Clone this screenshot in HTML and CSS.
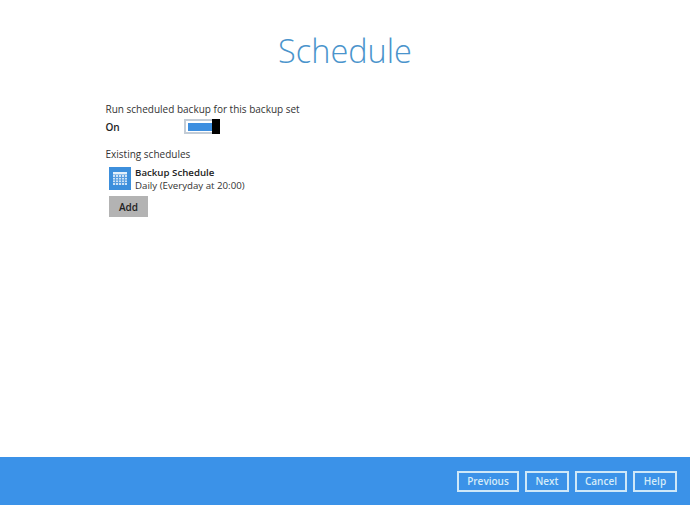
FILE: index.html
```html
<!DOCTYPE html>
<html lang="en">
<head>
    <meta charset="UTF-8">
    <meta name="viewport" content="width=device-width, initial-scale=1.0">
    <title>Schedule</title>
    <link rel="stylesheet" href="styles.css">
</head>
<body>
    <div class="main">
        <h1>Schedule</h1>
        <div class="content">
            <div class="run-label">Run scheduled backup for this backup set</div>
            <div class="toggle-row">
                <span class="toggle-state">On</span>
                <div class="toggle">
                    <div class="toggle-fill"></div>
                    <div class="toggle-knob"></div>
                </div>
            </div>
            <div class="existing-label">Existing schedules</div>
            <div class="schedule">
                <svg class="schedule-icon" width="22" height="23" viewBox="0 0 22 23">
                    <rect width="22" height="23" fill="#3d8fdc"/>
                    <rect x="4" y="5" width="14" height="2.5" fill="#e4f0fa"/>
                    <rect x="4" y="8" width="14" height="10" fill="#cfe3f6"/>
                    <path d="M6.5 8v10M9.5 8v10M12.5 8v10M15.5 8v10M4 10.5h14M4 13h14M4 15.5h14" stroke="#5b9fe0" stroke-width="1" fill="none"/>
                </svg>
                <div class="schedule-text">
                    <div class="schedule-name">Backup Schedule</div>
                    <div class="schedule-time">Daily (Everyday at 20:00)</div>
                </div>
            </div>
            <button class="add-btn" type="button">Add</button>
        </div>
    </div>
    <div class="footer">
        <button class="footer-btn btn-previous" type="button">Previous</button>
        <button class="footer-btn btn-next" type="button">Next</button>
        <button class="footer-btn btn-cancel" type="button">Cancel</button>
        <button class="footer-btn btn-help" type="button">Help</button>
    </div>
</body>
</html>
```

FILE: styles.css
```css
html, body {
    height: 100%;
}
body {
    margin: 0;
    display: flex;
    flex-direction: column;
    height: 505px;
    overflow: hidden;
    background-color: #fff;
    font-family: 'Open Sans', sans-serif;
    font-size: 10px;
    color: #333;
}
.main {
    flex: 1;
}
h1 {
    margin: 0;
    padding-top: 29px;
    text-align: center;
    font-size: 32.5px;
    line-height: 44px;
    font-weight: 300;
    color: #4a94cc;
}
.content {
    padding: 29px 0 0 105.5px;
}
.run-label {
    line-height: 15px;
}
.toggle-row {
    display: flex;
    align-items: center;
    height: 15px;
    margin-top: 2px;
}
.toggle-state {
    width: 78.5px;
    font-weight: 600;
    color: #222;
}
.toggle {
    display: flex;
    align-items: center;
    width: 36px;
    height: 15px;
    box-sizing: border-box;
    padding-left: 2px;
    border: 2px solid #c3ccd6;
    border-right: none;
}
.toggle-fill {
    width: 24px;
    height: 8px;
    background-color: #3d8fe0;
}
.toggle-knob {
    width: 8px;
    height: 15px;
    background-color: #000;
}
.existing-label {
    margin-top: 13px;
    line-height: 15px;
}
.schedule {
    display: flex;
    align-items: center;
    margin: 4px 0 0 3.5px;
}
.schedule-icon {
    flex-shrink: 0;
    margin-top: -1px;
}
.schedule-text {
    margin-left: 4px;
    line-height: 13px;
    font-size: 9.7px;
}
.schedule-name {
    font-weight: 600;
    color: #222;
}
.add-btn {
    display: block;
    width: 39px;
    height: 21px;
    margin: 4px 0 0 3.5px;
    padding: 0;
    border: none;
    background-color: #b3b3b3;
    font-family: inherit;
    font-size: 10px;
    font-weight: 600;
    color: #222;
}
.footer {
    display: flex;
    justify-content: flex-end;
    align-items: center;
    gap: 6px;
    height: 48px;
    padding-right: 13px;
    background-color: #3b92e8;
}
.footer-btn {
    height: 21px;
    padding: 0;
    box-sizing: border-box;
    border: 2px solid #cfe8f8;
    background: none;
    font-family: inherit;
    font-size: 10px;
    font-weight: 600;
    color: #d5ecf8;
}
.btn-previous { width: 62px; }
.btn-next { width: 44px; }
.btn-cancel { width: 52px; }
.btn-help { width: 44px; }
```
